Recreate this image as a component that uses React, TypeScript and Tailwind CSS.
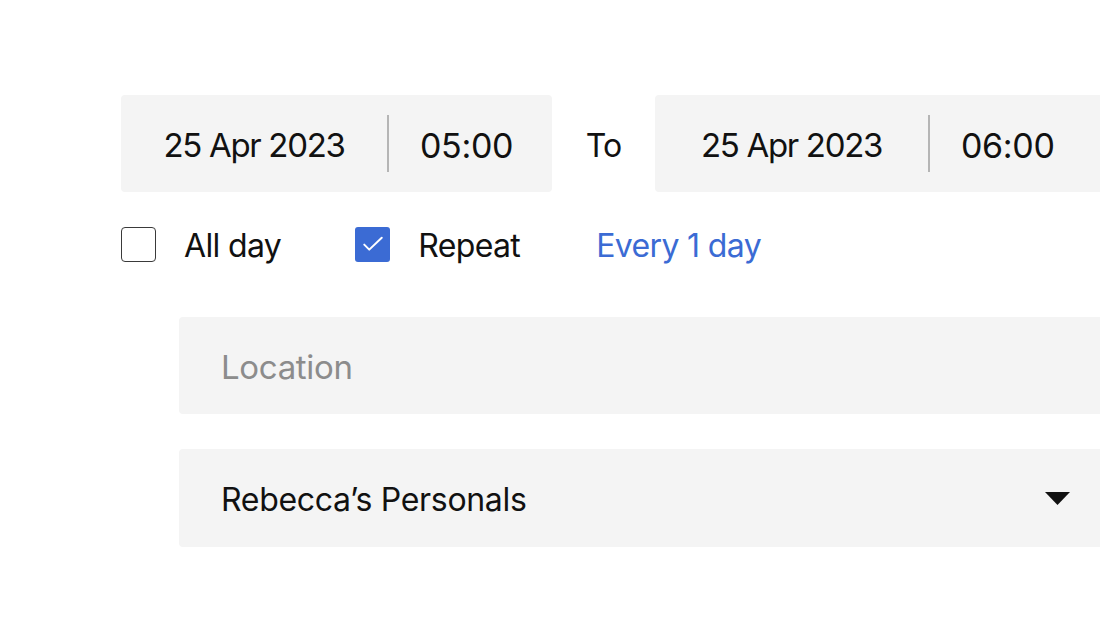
import React from "react";

function Checkbox({ checked }: { checked?: boolean }) {
  if (checked) {
    return (
      <span className="flex h-[35px] w-[35px] items-center justify-center rounded-[3px] bg-[#3b6bd4]">
        <svg width="30" height="30" viewBox="0 0 24 24" fill="none">
          <path d="M5 12.5l4 4L19 7" stroke="#fff" strokeWidth="1.6" strokeLinecap="round" strokeLinejoin="round" />
        </svg>
      </span>
    );
  }
  return <span className="block h-[35px] w-[35px] rounded-[4px] border border-[#3a3a3a] bg-white" />;
}

function DateTimeBox({ date, time, dateWidth, className }: { date: string; time: string; dateWidth: string; className?: string }) {
  return (
    <div className={"flex h-[97px] shrink-0 items-center rounded-[4px] bg-[#f4f4f4] " + (className ?? "")}>
      <div className={"flex h-full items-center justify-center pt-[4px] text-[33px] tracking-[-0.04em] " + dateWidth}>{date}</div>
      <div className="h-[57px] w-[2px] bg-[#b5b5b5]" />
      <div className="flex h-full flex-1 items-center pl-[31px] pt-[4px] text-[34px] tracking-[-0.01em]">{time}</div>
    </div>
  );
}

export default function App() {
  return (
    <div
      className="h-[636px] w-[1100px] overflow-hidden bg-white pt-[95px] pl-[121px] text-[#111]"
      style={{ fontFamily: "Inter, 'Noto Sans', sans-serif" }}
    >
      <div className="flex w-[1100px] items-center">
        <DateTimeBox date="25 Apr 2023" time="05:00" dateWidth="w-[266px]" className="w-[431px]" />
        <div className="flex w-[103px] justify-center pt-[4px] text-[32px] tracking-[-0.03em]">To</div>
        <DateTimeBox date="25 Apr 2023" time="06:00" dateWidth="w-[273px]" className="w-[480px]" />
      </div>

      <div className="mt-[28px] flex items-center text-[32px] tracking-[-0.02em]">
        <label className="flex items-center gap-[28px]">
          <Checkbox />
          <span className="translate-y-[2px]">All day</span>
        </label>
        <label className="ml-[74px] flex items-center gap-[28px]">
          <Checkbox checked />
          <span className="translate-y-[2px]">Repeat</span>
        </label>
        <span className="ml-[76px] translate-y-[2px] text-[#3b6bd4]">Every 1 day</span>
      </div>

      <div className="ml-[58px] mt-[49px] flex flex-col gap-[35px] tracking-[-0.02em]">
        <div className="flex h-[97px] w-[980px] items-center rounded-[4px] bg-[#f4f4f4] pl-[42px] pt-[4px] text-[33px] text-[#8c8c8c]">
          Location
        </div>
        <div className="flex h-[98px] w-[980px] items-center rounded-[4px] bg-[#f4f4f4] pl-[42px] text-[32px]">
          <span className="flex-1 translate-y-[2px]">Rebecca’s Personals</span>
          <svg className="mr-[89px]" width="25" height="13" viewBox="0 0 25 13">
            <path d="M0 0h25L12.5 13z" fill="#111" />
          </svg>
        </div>
      </div>
    </div>
  );
}
